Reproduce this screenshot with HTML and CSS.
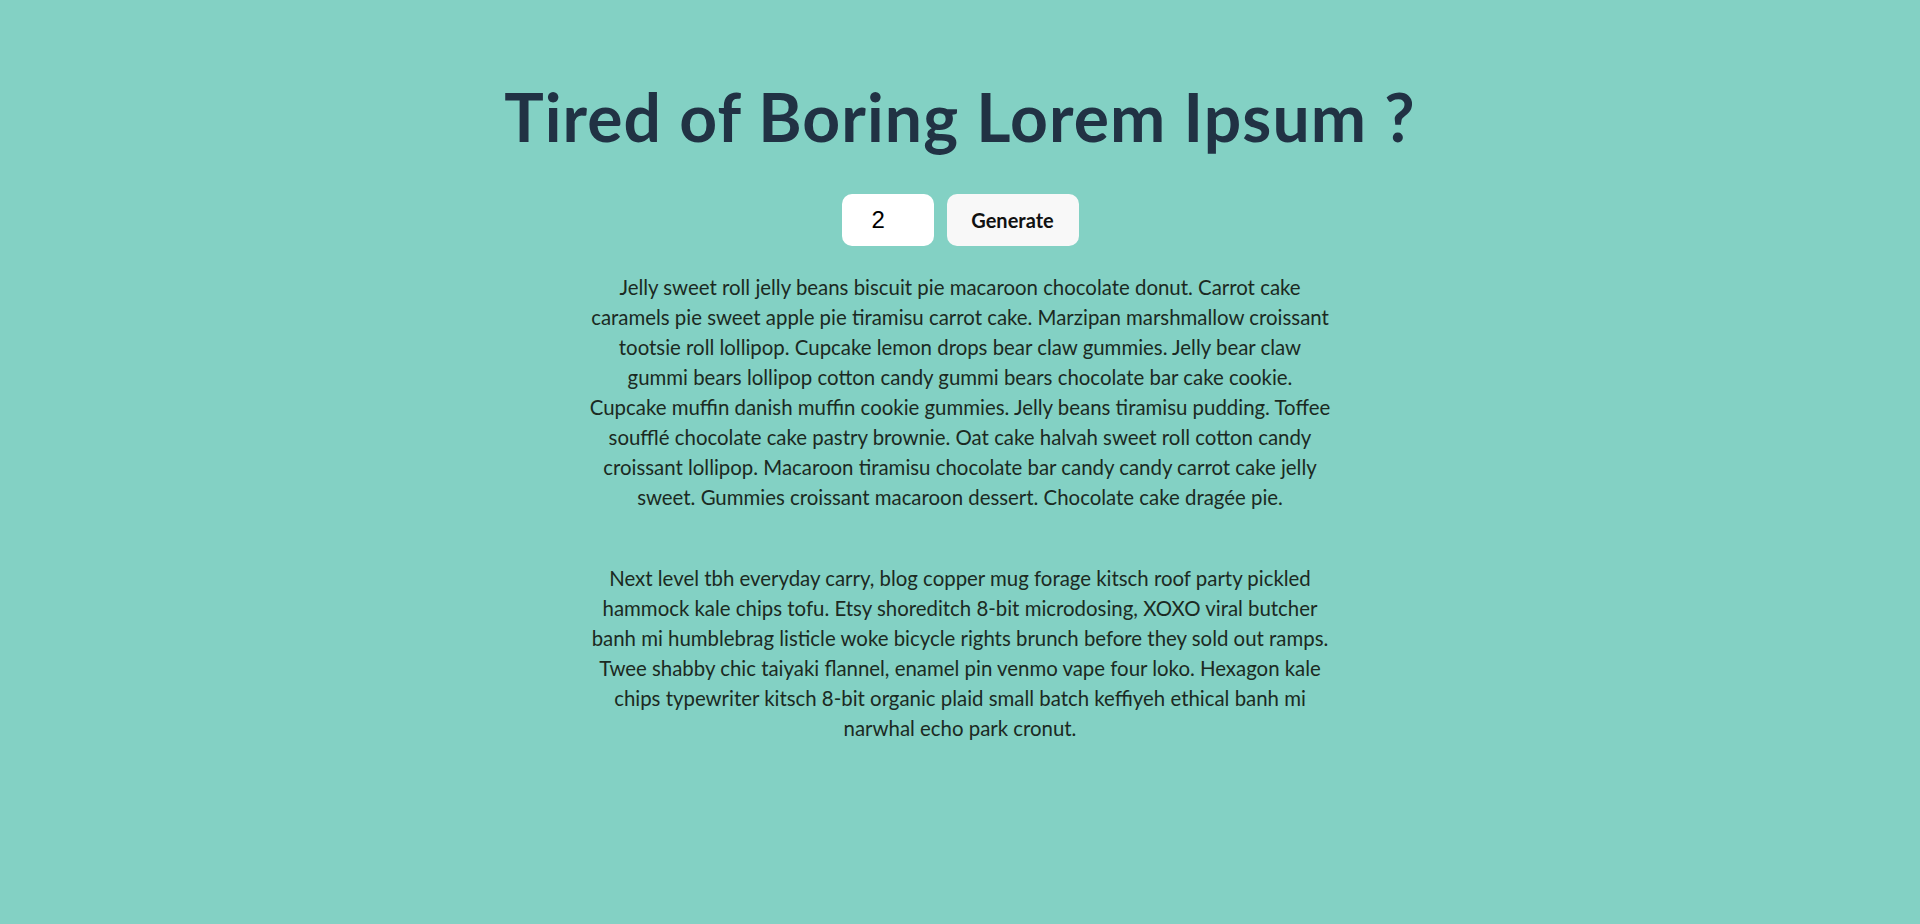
FILE: index.html
```html
<!DOCTYPE html>
<html lang="en">
<head>
<meta charset="utf-8">
<title>Lorem Generator</title>
<link rel="stylesheet" href="styles.css">
</head>
<body>
<main class="page">
  <h1 class="title">Tired of Boring Lorem Ipsum ?</h1>
  <form class="controls">
    <input class="count" type="number" value="2">
    <button class="generate" type="button">Generate</button>
  </form>
  <section class="output">
    <p class="para">Jelly sweet roll jelly beans biscuit pie macaroon chocolate donut. Carrot cake<br>caramels pie sweet apple pie tiramisu carrot cake. Marzipan marshmallow croissant<br>tootsie roll lollipop. Cupcake lemon drops bear claw gummies. Jelly bear claw<br>gummi bears lollipop cotton candy gummi bears chocolate bar cake cookie.<br>Cupcake muffin danish muffin cookie gummies. Jelly beans tiramisu pudding. Toffee<br>soufflé chocolate cake pastry brownie. Oat cake halvah sweet roll cotton candy<br>croissant lollipop. Macaroon tiramisu chocolate bar candy candy carrot cake jelly<br>sweet. Gummies croissant macaroon dessert. Chocolate cake dragée pie.</p>
    <p class="para">Next level tbh everyday carry, blog copper mug forage kitsch roof party pickled<br>hammock kale chips tofu. Etsy shoreditch 8-bit microdosing, XOXO viral butcher<br>banh mi humblebrag listicle woke bicycle rights brunch before they sold out ramps.<br>Twee shabby chic taiyaki flannel, enamel pin venmo vape four loko. Hexagon kale<br>chips typewriter kitsch 8-bit organic plaid small batch keffiyeh ethical banh mi<br>narwhal echo park cronut.</p>
  </section>
</main>
</body>
</html>
```

FILE: styles.css
```css
html, body {
  margin: 0;
  padding: 0;
}
body {
  background: #83d1c4;
  font-family: Lato, "Liberation Sans", sans-serif;
  min-height: 924px;
}
.page {
  display: flex;
  flex-direction: column;
  align-items: center;
  padding-top: 79px;
}
.title {
  margin: 0;
  font-size: 66px;
  letter-spacing: 1.1px;
  line-height: 76px;
  font-weight: 700;
  color: #213244;
}
.controls {
  display: flex;
  gap: 13px;
  margin-top: 39px;
}
.count {
  box-sizing: border-box;
  width: 92px;
  height: 52px;
  border: none;
  border-radius: 10px;
  background: #fff;
  padding: 0 0 0 30px;
  font-family: "Liberation Sans", Arial, sans-serif;
  font-size: 24px;
  color: #000;
  -moz-appearance: textfield;
  appearance: textfield;
}
.count::-webkit-inner-spin-button,
.count::-webkit-outer-spin-button {
  -webkit-appearance: none;
  margin: 0;
}
.generate {
  box-sizing: border-box;
  width: 132px;
  height: 52px;
  border: none;
  border-radius: 10px;
  background: #f8f8f8;
  font-family: Lato, "Liberation Sans", sans-serif;
  font-weight: 700;
  font-size: 20px;
  color: #111;
}
.output {
  width: 820px;
  margin-top: 26px;
}
.para {
  margin: 0 0 51px;
  text-align: center;
  font-size: 20.4px;
  line-height: 30px;
  color: #1b2a22;
}
```
